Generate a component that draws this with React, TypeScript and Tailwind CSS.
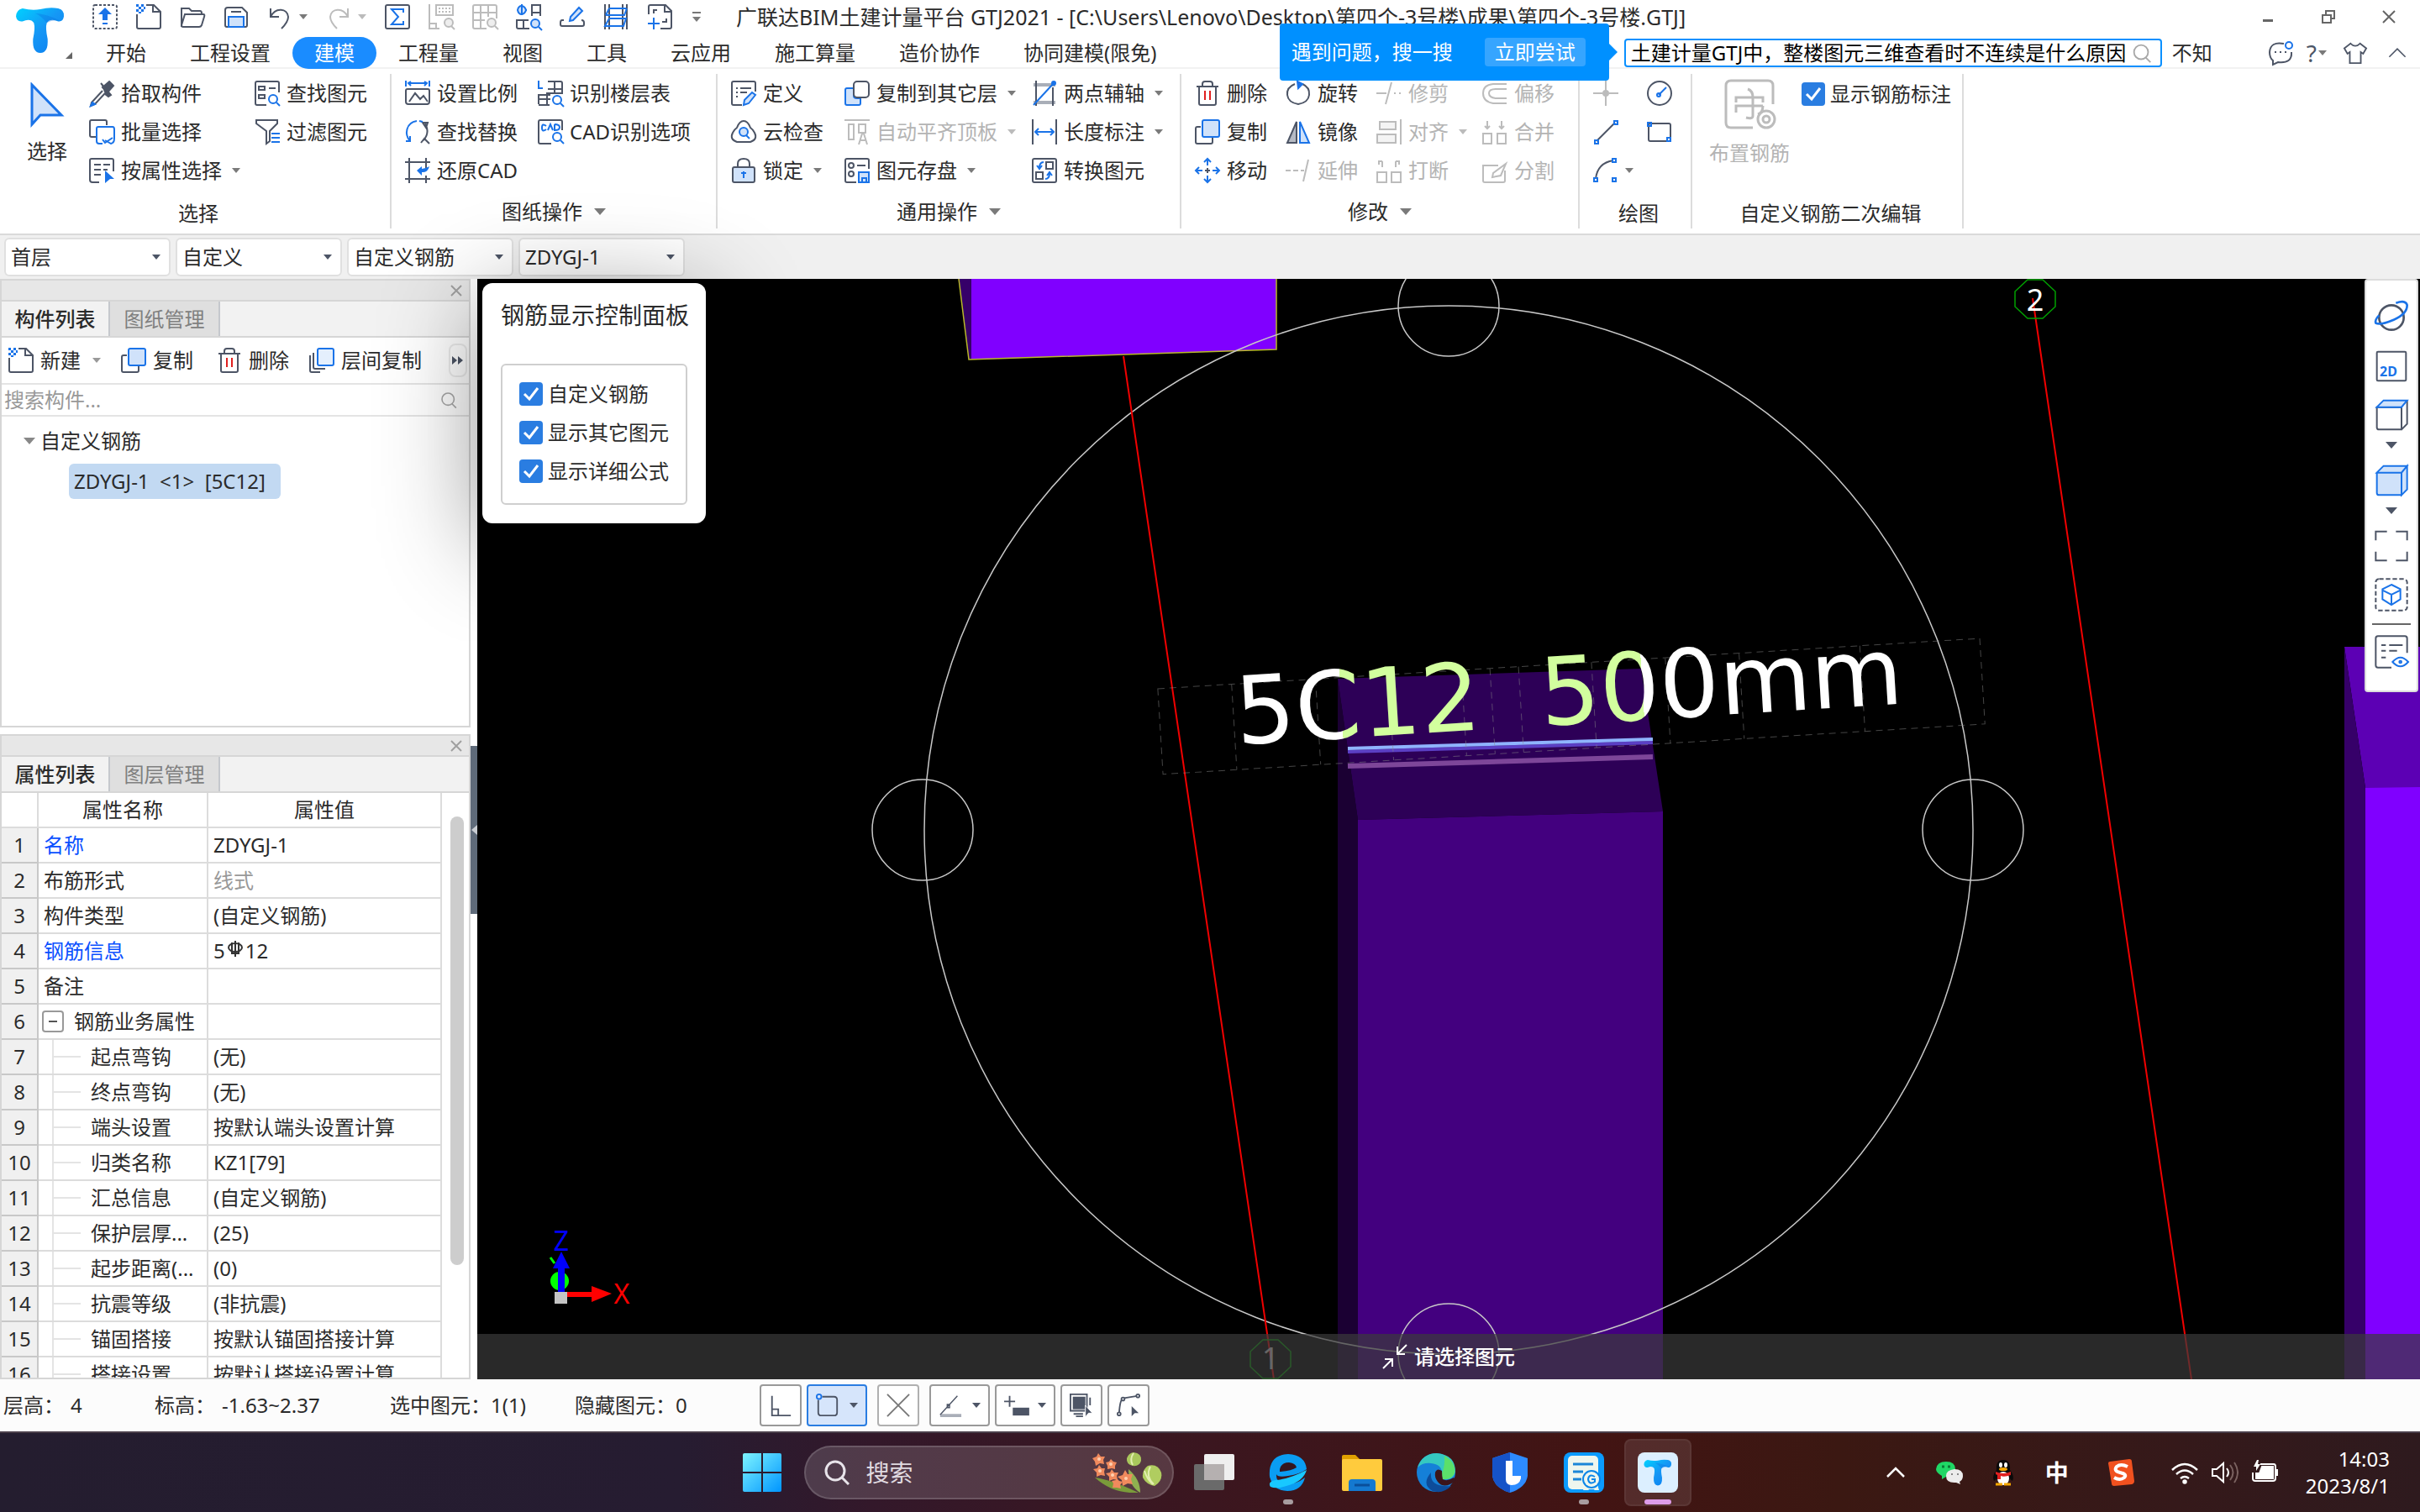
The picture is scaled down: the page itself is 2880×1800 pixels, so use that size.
import React from "react";

const D = "#4d5566";
const B = "#1a73e8";
const F = "#d0e2fa";
const G = "#bcbcbc";

// every glyph is drawn on a 30x30 grid
const icons: Record<string, React.ReactNode> = {
  upload: (
    <>
      <rect x="1" y="1" width="28" height="28" rx="2" strokeDasharray="3 2" />
      <path d="M15 4l8 8h-5v7h-6v-7H7z" fill={B} stroke="none" />
      <path d="M12 23h6" stroke={B} />
    </>
  ),
  newFile: (
    <>
      <path d="M1 12v15q0 2 2 2h24q2 0 2-2V9l-8-8h-9M20 1v8h9" />
      <path d="M0 0h3v3H0zM6 0h3v3H6zM3 3h3v3H3zM0 6h3v3H0zM6 6h3v3H6zM9 3h2v3H9zM3 9h3v2H3z" fill={B} stroke="none" />
    </>
  ),
  open: (
    <>
      <path d="M2 27V5h9l3 3h10q2 0 2 3v1" />
      <path d="M6 12h22q2 0 1 3l-3 10q-1 2-3 2H4q-2 0-2-2z" />
    </>
  ),
  save: (
    <>
      <path d="M2 7q0-3 3-3h17l6 6v15q0 2-2 2H4q-2 0-2-2z" />
      <path d="M9 9h12" />
      <path d="M6 27V15h18v12z" fill={F} stroke={B} />
    </>
  ),
  undo: <path d="M4 5v10h10M4 15C10 3 24 5 25 15q0 6-8 14" />,
  redo: <path d="M26 5v10H16M26 15C20 3 6 5 5 15q0 6 8 14" stroke={G} />,
  sum: (
    <>
      <rect x="1" y="1" width="28" height="28" rx="2" />
      <path d="M22 10V6H8l8 9-8 9h14v-4" stroke={B} />
    </>
  ),
  calcFind: (
    <g stroke={G}>
      <path d="M1 0v29h12M1 23h8v6" />
      <rect x="9" y="1" width="20" height="12" />
      <path d="M12 5h15M12 9h15" strokeDasharray="2 2" />
      <circle cx="24" cy="22" r="5" fill="#eee" />
      <path d="M27 26l4 4" />
    </g>
  ),
  gridFind: (
    <g stroke={G}>
      <path d="M17 29H3q-2 0-2-2V3q0-2 2-2h24q2 0 2 2v14M1 10h28M1 19h14M10 1v28M19 1v14" />
      <circle cx="23" cy="22" r="5" fill="#eee" />
      <path d="M27 26l4 4" />
    </g>
  ),
  schema: (
    <>
      <path d="M7 0v13M2 7h11" stroke={B} />
      <path d="M7 2q-4 0-5 5 1 5 5 5M7 2q4 1 5 5-1 4-5 5" stroke={B} fill={F} />
      <path d="M7 1v12" stroke={B} />
      <path d="M19 14V1h10v13M19 10h10M1 18v9q0 2 2 2h13M1 19h14M9 19v10" />
      <circle cx="23" cy="23" r="5" fill={F} stroke={B} />
      <path d="M27 27l4 4" stroke={B} />
    </>
  ),
  pen: (
    <>
      <path d="M5 19H3q-2 0-2 3v2q0 2 2 2h24q2 0 2-2v-2q0-3-3-3" />
      <path d="M12 20l1-5L23 4l4 4-11 11z" fill={F} stroke={B} />
    </>
  ),
  ladder: (
    <>
      <path d="M2 0v30M7 0v30M23 0v30M28 0v30" />
      <path d="M7 5h20M3 13h22l3-8M3 13L7 5M7 17h20l-3 9H2l5-9" stroke={B} />
    </>
  ),
  addPage: (
    <>
      <path d="M2 12V3q0-2 2-2h18l7 7v19q0 2-2 2H16M21 1v8h8M8 11V7h4M23 17v4h-5" />
      <path d="M8 16v14M1 23h14" stroke={B} />
    </>
  ),
  dropper: (
    <>
      <path d="M14 3l12 14-3 2-4-3M24 1l5 5-7 8-6-6z" fill={D} />
      <path d="M16 12L3 26l-1 4 5-2 12-13" />
      <path d="M4 26l-2 4 5-2z" fill={B} stroke={B} />
    </>
  ),
  batch: (
    <>
      <path d="M8 21H3q-2 0-2-2V3q0-2 2-2h16q2 0 2 2v4" />
      <path d="M9 11q0-2 2-2h17q2 0 2 3v11q0 5-4 6l-7-4M16 29h-4q-3 0-3-3V11M16 24l3 4 9-6" stroke={B} />
    </>
  ),
  byProp: (
    <>
      <path d="M12 29H4q-3 0-3-3V3q0-2 2-2h24q2 0 2 2v13M6 8h8M17 8h8M6 14h8M17 14h5M6 20h8" />
      <path d="M19 15l11 10h-5l-6 5z" fill={B} stroke="none" />
    </>
  ),
  findEl: (
    <>
      <path d="M14 29H3q-2 0-2-2V3q0-2 2-2h24q2 0 2 2v11M17 9h8" />
      <rect x="5" y="7" width="7" height="4" />
      <rect x="5" y="17" width="7" height="4" />
      <circle cx="22" cy="22" r="5" stroke={B} />
      <path d="M26 26l4 4" stroke={B} />
    </>
  ),
  filter: (
    <>
      <path d="M2 1h25v4l-9 9v12l-4 3V14L2 5z" />
      <path d="M20 17h10M20 22h10M20 27h10" stroke={B} />
    </>
  ),
  scale: (
    <>
      <path d="M1 0v7M29 0v7M4 3h22M7 1L4 3l3 3M23 1l3 2-3 3" stroke={B} />
      <path d="M3 10h24q2 0 2 2v13q0 3-3 3H4q-3 0-3-3V12q0-2 2-2zM5 25l7-10 6 7 4-4 5 7" />
    </>
  ),
  replace: (
    <>
      <path d="M14 2C1 4-1 18 6 26M6 20v6H1" stroke={B} />
      <path d="M24 5q6 11-2 20M29 29l-6-6-4 5M21 4l6 0-2 6z" />
      <path d="M17 2l4 1" stroke={B} />
    </>
  ),
  restore: (
    <>
      <path d="M0 5h30M0 25h30M5 0v30M25 0v12M25 21v9" />
      <path d="M14 15l6-5v3q6-1 9-3-2 8-9 7v4z" fill={B} stroke="none" />
    </>
  ),
  floors: (
    <>
      <path d="M1 0v9h5" stroke={B} />
      <path d="M12 1h15q2 0 2 2v12H11v14M12 10h17M20 1v14M1 28V17h14M1 22h14M1 29h13" />
      <circle cx="23" cy="23" r="5" stroke={B} />
      <path d="M27 27l4 4" stroke={B} />
    </>
  ),
  cadOpt: (
    <>
      <path d="M16 29H3q-2 0-2-2V3q0-2 2-2h24q2 0 2 2v10" />
      <path d="M10 8Q5 4 5 10t5 2M12 13l3-7 3 7M20 6v7q6 0 6-3.500T20 6" stroke={B} />
      <circle cx="23" cy="21" r="5" stroke={B} />
      <path d="M27 25l4 4" stroke={B} />
    </>
  ),
  define: (
    <>
      <path d="M13 29H3q-2 0-2-2V3q0-2 2-2h24q2 0 2 2v10M6 9h2M11 9h13M6 14h2M11 14h8M6 19h2" />
      <path d="M15 29l1-6 9-9 4 3-8 10z" fill={F} stroke={B} />
    </>
  ),
  cloudCheck: (
    <>
      <path d="M7 27Q-2 24 2 16q2-4 5-6Q10 2 15 2t8 8q3 2 5 6 4 8-5 11z" />
      <circle cx="15" cy="15" r="5" fill={F} stroke={B} />
      <path d="M18 19l4 4" stroke={B} />
    </>
  ),
  lock: (
    <>
      <path d="M8 11V7q0-6 7-6t7 6v4" />
      <rect x="2" y="11" width="26" height="18" rx="2" fill={F} />
      <path d="M15 16v8M12 18h6" stroke={B} />
    </>
  ),
  copyFloor: (
    <>
      <path d="M11 9H3q-2 0-2 2v16q0 2 2 2h14q2 0 2-2v-6h-4q-4 0-4-3z" fill={F} stroke={B} />
      <rect x="11" y="1" width="18" height="19" rx="4" />
    </>
  ),
  alignTop: (
    <g stroke={G}>
      <path d="M0 1h30M5 6h6v18H5zM17 6h8v10h-8zM17 30l4-13h2l4 13M19 25h7" />
    </g>
  ),
  store: (
    <>
      <path d="M14 29H3q-2 0-2-2V3q0-2 2-2h24q2 0 2 2v10M15 9h10" />
      <circle cx="8" cy="9" r="3" />
      <circle cx="8" cy="19" r="3" />
      <path d="M17 17h12v12H17z" fill={F} stroke={B} />
      <path d="M21 29v-5h5v5" stroke={B} />
    </>
  ),
  twoPoint: (
    <>
      <path d="M2 5h26M2 26h26" stroke="#a9aeb8" strokeWidth="4" />
      <path d="M5 0v30M25 8v22" />
      <path d="M2 29L26 3" stroke={B} />
      <circle cx="26" cy="3" r="2" fill={B} stroke={B} />
    </>
  ),
  length: (
    <>
      <path d="M1 0v30M29 0v30" />
      <path d="M4 15h22M8 11l-4 4 4 4M22 11l4 4-4 4" stroke={B} />
    </>
  ),
  convert: (
    <>
      <rect x="1" y="1" width="28" height="28" rx="2" />
      <path d="M17 5h8v8h-8zM5 17h8v8H5z" />
      <path d="M14 5q-5 0-5 7M6 9l3 4 3-4M16 25q5 0 5-7M18 21l3-4 3 4" stroke={B} />
    </>
  ),
  trash: (
    <>
      <path d="M2 7h26M5 7v20q0 2 2 2h16q2 0 2-2V7M9 7V4q0-3 3-3h6q3 0 3 3v3" />
      <path d="M12 12v11M18 12v11" stroke="#e02020" />
    </>
  ),
  copy: (
    <>
      <path d="M7 9H3q-2 0-2 2v16q0 2 2 2h16q2 0 2-2v-5" />
      <rect x="9" y="1" width="20" height="20" rx="2" fill={F} stroke={B} />
    </>
  ),
  copyLayer: (
    <>
      <path d="M1 9v18q0 2 2 2h10M5 6v17q0 2 2 2h12" />
      <rect x="10" y="1" width="19" height="20" rx="2" fill="#e4effd" stroke={B} />
    </>
  ),
  move: (
    <>
      <path d="M15 1v8M15 21v8M1 15h8M21 15h8M11 5l4-4 4 4M11 25l4 4 4-4M5 11l-4 4 4 4M25 11l4 4-4 4" stroke={B} />
      <path d="M12 15h6M15 12v6" />
    </>
  ),
  rotate: (
    <>
      <path d="M11 4Q1 8 2 17t13 11q12-2 13-11T20 4" />
      <path d="M14 1l6 3-5 5z" fill={B} stroke={B} />
    </>
  ),
  mirror: (
    <>
      <path d="M13 3v25H2z" fill="#b5bac4" />
      <path d="M17 3v25h11z" fill={F} stroke={B} />
    </>
  ),
  extend: <path d="M0 15h6M9 15h6M18 15h4M21 28l6-26" stroke={G} />,
  trim: <path d="M0 15h12M21 15h2M27 15h2M11 28l7-26" stroke={G} />,
  align: (
    <g stroke={G} fill="#f4f4f4">
      <path d="M4 3h19v9H4zM1 18h22v10H1zM29 0v30" />
    </g>
  ),
  breakIcon: (
    <g stroke={G}>
      <path d="M1 17h11v12H1zM18 17h11v12H18zM7 11V4M3 8V4h4M23 11V4M27 8V4h-4" />
    </g>
  ),
  offset: <path d="M29 4H13Q1 5 1 15t12 12h16M29 10H16q-8 0-8 5t8 6h13" stroke={G} />,
  split: <path d="M19 9H1v18q0 2 2 2h22q2 0 2-2V15M12 23l1-5L28 7l-6 14z" stroke={G} />,
  merge: (
    <g stroke={G}>
      <path d="M1 17h10v12H1zM18 17h10v12H18zM6 2v9M3 8l3 3 3-3M23 2v9M20 8l3 3 3-3" />
    </g>
  ),
  point: (
    <g stroke={G}>
      <path d="M15 0v30M0 15h11M19 15h11" />
      <circle cx="15" cy="15" r="3" fill={G} />
    </g>
  ),
  circle: (
    <>
      <circle cx="15" cy="15" r="14" />
      <path d="M14 17l9-9" stroke={B} />
      <circle cx="14" cy="17" r="2" stroke={B} />
    </>
  ),
  line: (
    <>
      <path d="M4 26L26 4" />
      <path d="M2 25h4v4H2zM25 2h4v4h-4z" stroke={B} />
    </>
  ),
  rect: (
    <>
      <rect x="2" y="5" width="26" height="21" rx="2" />
      <path d="M1 4h4v4H1zM24 22h4v4h-4z" stroke={B} />
    </>
  ),
  arc: (
    <>
      <path d="M3 25Q5 6 24 3" />
      <path d="M1 24h4v4H1zM23 1h4v4h-4zM23 24h4v4h-4z" stroke={B} />
    </>
  ),
  rebar: (
    <g stroke={G} strokeWidth="1.500">
      <path d="M17 29H4q-3 0-3-3V4q0-3 3-3h22q3 0 3 3v11" />
      <path d="M14 6q3 1 3 5M7 14v-3h16v3M17 11v11q0 2-4 1M7 20v-4h16M23 16q0 4-3 5" />
      <circle cx="25" cy="24" r="5" />
      <circle cx="25" cy="24" r="2" />
    </g>
  ),
  zoom: (
    <g stroke="#a8a8a8">
      <circle cx="14" cy="14" r="9" />
      <path d="M20 21l6 6" />
    </g>
  ),
  chat: (
    <>
      <path d="M19 4Q3 1 2 14q0 7 4 10v5l6-3q17 2 16-12" />
      <path d="M8 14h2M14 14h2M20 14h2" />
      <circle cx="25" cy="6" r="4" stroke={B} />
    </>
  ),
  shirt: <path d="M9 3q6 6 12 0l8 6-4 7-3-2v14H8V14l-3 2-4-7z" />,
  chevronUp: <path d="M3 21L15 9l12 12" />,
  orbit: (
    <>
      <circle cx="15" cy="15" r="11" />
      <path d="M19 2q9-3 10 2 0 8-12 13T1 20q-1-3 3-7" stroke={B} />
    </>
  ),
  twoD: <rect x="2" y="2" width="26" height="26" rx="1" strokeWidth="1.500" />,
  cube: (
    <g strokeWidth="1.500">
      <path d="M2 8v18q0 2 2 2h20V8zM24 28l5-5V2" />
      <path d="M2 8l6-6h21l-5 6z" fill={F} stroke={B} />
    </g>
  ),
  cubeSolid: (
    <g stroke={B} fill={F} strokeWidth="1.500">
      <path d="M2 8h22v20H4q-2 0-2-2zM24 28l5-5V2l-5 6zM2 8l6-6h21l-5 6z" />
    </g>
  ),
  corners: <path d="M1 10V2h10M19 2h10v8M1 20v8h10M19 28h10v-8" strokeWidth="1.500" />,
  dashedCube: (
    <g strokeWidth="1.500">
      <rect x="1" y="1" width="28" height="28" rx="3" strokeDasharray="4 2" />
      <path d="M15 6l8 4v9l-8 5-8-5v-9zM7 11l8 4 8-4M15 15v8" stroke={B} />
    </g>
  ),
  listEye: (
    <g strokeWidth="1.500">
      <path d="M15 29H3q-2 0-2-2V3q0-2 2-2h24q2 0 2 2v13M6 9h4M13 9h12M6 14h4M13 14h7M6 20h4" />
      <path d="M16 24q7-8 14 0-7 8-14 0z" stroke={B} />
      <circle cx="23" cy="24" r="1" stroke={B} />
    </g>
  ),
  ortho: <path d="M4 3v25h24M4 20h8v8" />,
  corner: (
    <>
      <path d="M8 4h15q4 0 4 4v16q0 4-4 4H7q-4 0-4-4V8" />
      <circle cx="4" cy="4" r="3" stroke={B} />
    </>
  ),
  cross: <path d="M1 1l28 28M29 1L1 29" stroke="#777" />,
  angle: (
    <>
      <path d="M2 28h27" stroke="#a9aeb8" strokeWidth="4" />
      <path d="M2 27L24 3M11 14h3v4h-3z" strokeWidth="1.500" />
    </>
  ),
  plusBox: (
    <>
      <path d="M7 3v14M0 10h14" />
      <rect x="12" y="19" width="19" height="8" fill={D} />
    </>
  ),
  layerPick: (
    <>
      <rect x="5" y="5" width="14" height="14" fill={D} />
      <path d="M1 22V1h21v21zM5 26h12M8 29h9M26 5v10" />
      <path d="M20 15l9 10h-5l-4 5z" fill={D} stroke="#fff" strokeWidth="1" />
    </>
  ),
  nodePick: (
    <>
      <path d="M3 26Q4 8 8 6l18-3" />
      <circle cx="3" cy="26" r="2" fill="#fff" />
      <circle cx="8" cy="7" r="2" fill="#fff" />
      <circle cx="27" cy="3" r="2" fill="#fff" />
      <path d="M19 16l9 9h-5l-4 4z" fill={D} stroke="none" />
    </>
  ),
};

const Icon = ({ name, className = "size-[30px]" }: { name: string; className?: string }) => (
  <svg viewBox="0 0 30 30" className={`${className} shrink-0 overflow-visible`} fill="none" stroke={D} strokeWidth="2" aria-hidden="true">
    {icons[name]}
  </svg>
);

const Arrow = ({ color = "text-[#7a7a7a]", size = "h-1.5 w-2.5" }: { color?: string; size?: string }) => (
  <svg viewBox="0 0 10 6" preserveAspectRatio="none" className={`${color} ${size} shrink-0`} fill="currentColor" aria-hidden="true">
    <path d="M0 0h10L5 6z" />
  </svg>
);

const TLogo = ({ className }: { className: string }) => (
  <svg viewBox="0 0 60 58" className={className} aria-hidden="true">
    <defs>
      <linearGradient id="tl" x1="0" y1="0" x2="1" y2="1">
        <stop offset="0" stopColor="#00d2ff" />
        <stop offset="0.500" stopColor="#1597f5" />
        <stop offset="1" stopColor="#0a7cf0" />
      </linearGradient>
    </defs>
    <path d="M8 2q12 3 22 1Q42 0 52 2q8 2 7 10-1 7-7 6-10-4-14 2-2 6 1 20 1 17-9 17t-9-17q3-14 1-20-4-6-14-2-7 1-8-6Q0 4 8 2z" fill="url(#tl)" />
    <path d="M24 8q14 1 30 9-10-1-16 3-6-8-14-12z" fill="#0a6fe0" opacity="0.350" />
  </svg>
);

const quickRight = ["sum", "calcFind", "gridFind", "schema", "pen", "ladder", "addPage"];

const tabs = ["开始", "工程设置", "建模", "工程量", "视图", "工具", "云应用", "施工算量", "造价协作", "协同建模(限免)"];

const IconButton = ({ name, label }: { name: string; label: string }) => (
  <button aria-label={label}>
    <Icon name={name} />
  </button>
);

const TitleBar = () => (
  <header className="flex h-[82px] shadow-[inset_0_-2px_0_#f2f2f2]">
    <div className="flex w-[100px] shrink-0 items-start pt-2 pl-[18px]">
      <TLogo className="h-14 w-[60px]" />
      <svg viewBox="0 0 8 8" className="mt-[54px] size-2" fill="#666" aria-hidden="true">
        <path d="M8 0v8H0z" />
      </svg>
    </div>
    <div className="min-w-0 flex-1">
      <div className="flex h-10 items-center gap-[22px] pr-[22px] pl-2.5">
        <IconButton name="upload" label="上传" />
        <IconButton name="newFile" label="新建" />
        <IconButton name="open" label="打开" />
        <IconButton name="save" label="保存" />
        <button className="flex items-center gap-2" aria-label="撤销">
          <Icon name="undo" />
          <Arrow />
        </button>
        <button className="flex items-center gap-2" aria-label="恢复">
          <Icon name="redo" />
          <Arrow color="text-[#bbb]" />
        </button>
        {quickRight.map((q) => (
          <IconButton key={q} name={q} label={q} />
        ))}
        <button className="flex w-3.5 flex-col items-center gap-1" aria-label="更多">
          <span className="h-0.5 w-2.5 bg-[#777]" />
          <Arrow />
        </button>
        <h1 className="ml-[18px] text-[25px] whitespace-nowrap">广联达BIM土建计量平台 GTJ2021 - [C:\Users\Lenovo\Desktop\第四个-3号楼\成果\第四个-3号楼.GTJ]</h1>
        <div className="ml-auto flex items-center gap-[42px] text-[#555]">
          <button className="flex h-[30px] w-[30px] items-center justify-center" aria-label="最小化">
            <span className="mt-2 h-[3px] w-3 bg-[#666]" />
          </button>
          <button className="flex w-[30px] justify-center" aria-label="还原">
            <svg viewBox="0 0 16 16" className="size-4" fill="none" stroke="#666" strokeWidth="2">
              <path d="M1 6h10v9H1zM5 6V1h10v9h-4" />
            </svg>
          </button>
          <button className="flex w-[30px] justify-center" aria-label="关闭">
            <svg viewBox="0 0 16 16" className="size-4" stroke="#666" strokeWidth="2">
              <path d="M1 1l14 14M15 1L1 15" />
            </svg>
          </button>
        </div>
      </div>
      <div className="flex h-[42px] items-end">
        <nav className="flex shrink-0">
          {tabs.map((t) => (
            <button key={t} className={`h-[38px] rounded-full px-[26px] whitespace-nowrap ${t === "建模" ? "bg-[#1a8cff] text-white" : ""}`}>
              {t}
            </button>
          ))}
        </nav>
        <div className="ml-auto flex h-[38px] items-center pr-[15px]">
          <div className="relative mr-3 flex h-[34px] w-[640px] items-center rounded-sm border-2 border-[#0a90ff] bg-white pr-2 pl-1.5">
            <input className="min-w-0 flex-1 text-black outline-none" aria-label="搜索帮助" defaultValue="土建计量GTJ中，整楼图元三维查看时不连续是什么原因" />
            <Icon name="zoom" className="size-7" />
            <div className="absolute right-full -top-5 z-20 mr-5 flex h-[68px] w-[392px] items-center justify-between rounded bg-[#0090ff] pr-7 pl-3.5 whitespace-nowrap text-white">
              <span>遇到问题，搜一搜</span>
              <button className="h-[34px] rounded-sm bg-[#36a5ff] px-3">立即尝试</button>
              <svg viewBox="0 0 10 20" className="absolute top-6 left-full h-5 w-2.5" fill="#0090ff">
                <path d="M0 0l10 10L0 20z" />
              </svg>
            </div>
          </div>
          <span className="w-[114px]">不知</span>
          <button aria-label="消息">
            <Icon name="chat" />
          </button>
          <button className="ml-4 flex items-center gap-0.5 text-[28px] leading-7 text-[#4d5566]" aria-label="帮助">
            ?<Arrow />
          </button>
          <button className="ml-5" aria-label="皮肤">
            <Icon name="shirt" className="size-7" />
          </button>
          <button className="ml-6" aria-label="收起">
            <Icon name="chevronUp" className="size-6" />
          </button>
        </div>
      </div>
    </div>
  </header>
);

type Tool = { icon: string; text?: string; arrow?: boolean; off?: boolean };

const ToolButton = ({ icon, text, arrow, off }: Tool) => (
  <button disabled={off} aria-label={text ?? icon} className={`flex h-[46px] items-center gap-2 whitespace-nowrap ${off ? "text-[#b4b4b4]" : ""}`}>
    <Icon name={icon} />
    {text}
    {arrow && (
      <span className={text ? "ml-1" : ""}>
        <Arrow color={off ? "text-[#bbb]" : "text-[#7a7a7a]"} />
      </span>
    )}
  </button>
);

const Col = ({ w, tools }: { w: string; tools: Tool[] }) => (
  <div className={`${w} shrink-0`}>
    {tools.map((t) => (
      <ToolButton key={t.icon} {...t} />
    ))}
  </div>
);

const Group = ({ label, arrow, pad = "pl-4", children }: { label: string; arrow?: boolean; pad?: string; children: React.ReactNode }) => (
  <section className="flex h-[184px] shrink-0 flex-col border-r-2 border-[#dcdcdc]">
    <div className={`flex h-[138px] ${pad}`}>{children}</div>
    <div className={`flex h-11 items-center justify-center gap-3.5 ${arrow ? "pt-2" : "pt-3 pl-2"}`}>
      {label}
      {arrow && <Arrow size="h-2 w-3.5" />}
    </div>
  </section>
);

const Check = ({ label, gap }: { label: string; gap: string }) => (
  <label className={`flex items-center ${gap}`}>
    <span className="relative flex size-7 shrink-0">
      <input type="checkbox" defaultChecked className="size-7 appearance-none rounded-sm bg-[#2a7de1]" />
      <svg viewBox="0 0 28 28" className="pointer-events-none absolute inset-0 size-7" fill="none" stroke="#fff" strokeWidth="3">
        <path d="M6 14l6 6L22 7" />
      </svg>
    </span>
    {label}
  </label>
);

const Ribbon = () => (
  <div className="flex h-[198px] border-b-2 border-[#dadada] pt-1.5">
    <Group label="选择" pad="pl-1.5">
      <button className="flex w-[100px] flex-col items-center gap-3 pt-2.5">
        <svg viewBox="0 0 42 54" className="h-[54px] w-[42px]" fill={F} stroke={B} strokeWidth="3">
          <path d="M3 3v47l10-11h25z" />
        </svg>
        选择
      </button>
      <Col
        w="w-[197px]"
        tools={[
          { icon: "dropper", text: "拾取构件" },
          { icon: "batch", text: "批量选择" },
          { icon: "byProp", text: "按属性选择", arrow: true },
        ]}
      />
      <Col w="w-[161px]" tools={[{ icon: "findEl", text: "查找图元" }, { icon: "filter", text: "过滤图元" }]} />
    </Group>
    <Group label="图纸操作" arrow>
      <Col
        w="w-[158px]"
        tools={[
          { icon: "scale", text: "设置比例" },
          { icon: "replace", text: "查找替换" },
          { icon: "restore", text: "还原CAD" },
        ]}
      />
      <Col w="w-[212px]" tools={[{ icon: "floors", text: "识别楼层表" }, { icon: "cadOpt", text: "CAD识别选项" }]} />
    </Group>
    <Group label="通用操作" arrow>
      <Col
        w="w-[135px]"
        tools={[
          { icon: "define", text: "定义" },
          { icon: "cloudCheck", text: "云检查" },
          { icon: "lock", text: "锁定", arrow: true },
        ]}
      />
      <Col
        w="w-[223px]"
        tools={[
          { icon: "copyFloor", text: "复制到其它层", arrow: true },
          { icon: "alignTop", text: "自动平齐顶板", arrow: true, off: true },
          { icon: "store", text: "图元存盘", arrow: true },
        ]}
      />
      <Col
        w="w-[176px]"
        tools={[
          { icon: "twoPoint", text: "两点辅轴", arrow: true },
          { icon: "length", text: "长度标注", arrow: true },
          { icon: "convert", text: "转换图元" },
        ]}
      />
    </Group>
    <Group label="修改" arrow>
      <Col
        w="w-[108px]"
        tools={[
          { icon: "trash", text: "删除" },
          { icon: "copy", text: "复制" },
          { icon: "move", text: "移动" },
        ]}
      />
      <Col
        w="w-[108px]"
        tools={[
          { icon: "rotate", text: "旋转" },
          { icon: "mirror", text: "镜像" },
          { icon: "extend", text: "延伸", off: true },
        ]}
      />
      <Col
        w="w-[126px]"
        tools={[
          { icon: "trim", text: "修剪", off: true },
          { icon: "align", text: "对齐", arrow: true, off: true },
          { icon: "breakIcon", text: "打断", off: true },
        ]}
      />
      <Col
        w="w-[114px]"
        tools={[
          { icon: "offset", text: "偏移", off: true },
          { icon: "merge", text: "合并", off: true },
          { icon: "split", text: "分割", off: true },
        ]}
      />
    </Group>
    <Group label="绘图">
      <Col w="w-16" tools={[{ icon: "point", off: true }, { icon: "line" }, { icon: "arc", arrow: true }]} />
      <Col w="w-[52px]" tools={[{ icon: "circle" }, { icon: "rect" }]} />
    </Group>
    <Group label="自定义钢筋二次编辑" pad="pl-5">
      <button disabled className="flex w-24 flex-col items-center gap-3 pt-1.5 text-[#b4b4b4]">
        <Icon name="rebar" className="size-[60px]" />
        布置钢筋
      </button>
      <div className="w-[205px] pt-2 pl-3.5">
        <Check label="显示钢筋标注" gap="gap-1.5" />
      </div>
    </Group>
  </div>
);

const selectors = [
  { label: "楼层", value: "首层" },
  { label: "构件分类", value: "自定义" },
  { label: "构件类型", value: "自定义钢筋" },
  { label: "构件", value: "ZDYGJ-1" },
];

const SelectorBar = () => (
  <div className="flex h-[52px] items-center gap-1.5 bg-[#f0f0f0] pl-[5px]">
    {selectors.map((s) => (
      <div key={s.label} className="relative flex items-center">
        <select aria-label={s.label} className="h-[46px] w-[198px] appearance-none rounded-md border-2 border-[#e0e0e0] bg-white px-1.5">
          <option>{s.value}</option>
        </select>
        <span className="pointer-events-none absolute right-3">
          <Arrow color="text-[#4d5566]" />
        </span>
      </div>
    ))}
  </div>
);

const DockHead = ({ active, other }: { active: string; other: string }) => (
  <>
    <div className="flex h-[23px] shrink-0 items-center justify-end bg-[#e7e7e7] pr-2">
      <button aria-label="关闭面板">
        <svg viewBox="0 0 14 14" className="size-3.5" stroke="#a0a0a0" strokeWidth="2">
          <path d="M1 1l12 12M13 1L1 13" />
        </svg>
      </button>
    </div>
    <div className="flex h-[45px] shrink-0 border-y-2 border-[#d6d6d6] bg-[#f2f2f2]">
      <button className="w-[129px] border-r-2 border-[#c5c8cd] bg-[#f2f2f2] font-medium">{active}</button>
      <button className="w-[131px] border-r-2 border-[#c5c8cd] bg-[#dfdfdf] text-[#808080]">{other}</button>
    </div>
  </>
);

const ComponentPanel = () => (
  <section className="flex h-[534px] flex-col border-2 border-[#d6d6d6] bg-white">
    <DockHead active="构件列表" other="图纸管理" />
    <div className="flex h-14 shrink-0 items-center border-b-2 border-[#e4e4e4] pl-2">
      <button className="flex w-[134px] items-center gap-2">
        <Icon name="newFile" />
        新建
        <span className="ml-1.5">
          <Arrow color="text-[#999]" />
        </span>
      </button>
      <button className="flex w-[114px] items-center gap-2">
        <Icon name="copy" />
        复制
      </button>
      <button className="flex w-[110px] items-center gap-2">
        <Icon name="trash" />
        删除
      </button>
      <button className="flex w-[166px] items-center gap-2">
        <Icon name="copyLayer" />
        层间复制
      </button>
      <button className="flex h-10 w-[22px] items-center justify-center rounded-lg border-2 border-[#ececec]" aria-label="更多">
        <svg viewBox="0 0 14 10" className="h-2.5 w-3.5 shrink-0" fill={D}>
          <path d="M0 0l6 5-6 5zM7 0l6 5-6 5z" />
        </svg>
      </button>
    </div>
    <div className="flex h-[38px] shrink-0 items-center border-b-2 border-[#e4e4e4] pr-3 pl-[3px]">
      <input className="min-w-0 flex-1 outline-none placeholder:text-[#999]" aria-label="搜索构件" placeholder="搜索构件..." />
      <Icon name="zoom" className="size-6" />
    </div>
    <ul className="pt-1.5">
      <li>
        <div className="flex h-[46px] items-center gap-1.5 pl-[26px]">
          <Arrow color="text-[#888]" size="h-2 w-3.5" />
          自定义钢筋
        </div>
        <ul className="mt-1 pl-20">
          <li className="flex h-[42px] w-[252px] items-center rounded-md bg-[#c2d9f2] pl-1.5 whitespace-pre">{"ZDYGJ-1  <1>  [5C12]"}</li>
        </ul>
      </li>
    </ul>
  </section>
);

const RebarMark = () => (
  <svg viewBox="0 0 20 20" className="mx-0.5 mb-2 inline size-5" fill="none" stroke="#333" strokeWidth="2" aria-label="C">
    <ellipse cx="10" cy="8" rx="8" ry="5" />
    <path d="M10 0v19M6 2v12M14 2v12M5 15h10" />
  </svg>
);

type Prop = { name: string; value: React.ReactNode; blue?: boolean; dim?: boolean; kind?: "parent" | "child" };

const props: Prop[] = [
  { name: "名称", value: "ZDYGJ-1", blue: true },
  { name: "布筋形式", value: "线式", dim: true },
  { name: "构件类型", value: "(自定义钢筋)" },
  { name: "钢筋信息", value: <>5<RebarMark />12</>, blue: true },
  { name: "备注", value: "" },
  { name: "钢筋业务属性", value: "", kind: "parent" },
  { name: "起点弯钩", value: "(无)", kind: "child" },
  { name: "终点弯钩", value: "(无)", kind: "child" },
  { name: "端头设置", value: "按默认端头设置计算", kind: "child" },
  { name: "归类名称", value: "KZ1[79]", kind: "child" },
  { name: "汇总信息", value: "(自定义钢筋)", kind: "child" },
  { name: "保护层厚...", value: "(25)", kind: "child" },
  { name: "起步距离(...", value: "(0)", kind: "child" },
  { name: "抗震等级", value: "(非抗震)", kind: "child" },
  { name: "锚固搭接", value: "按默认锚固搭接计算", kind: "child" },
  { name: "搭接设置", value: "按默认搭接设置计算", kind: "child" },
];

const PropName = ({ p }: { p: Prop }) => {
  if (p.kind === "parent") {
    return (
      <div className="flex items-center gap-3 pl-1">
        <button className="flex size-[26px] items-center justify-center rounded-sm border-2 border-[#999]" aria-label="折叠">
          <span className="h-0.5 w-2.5 bg-[#555]" />
        </button>
        {p.name}
      </div>
    );
  }
  if (p.kind === "child") {
    return (
      <div className="flex h-10 items-center">
        <span className="h-10 w-[18px] border-r-2 border-[#e4e4e4]" />
        <span className="mr-3 h-0.5 w-8 bg-[#e4e4e4]" />
        {p.name}
      </div>
    );
  }
  return <div className={`pl-1.5 ${p.blue ? "text-[#0a50ff]" : ""}`}>{p.name}</div>;
};

const PropertyPanel = () => (
  <section className="flex min-h-0 flex-1 flex-col border-2 border-[#d6d6d6] bg-white">
    <DockHead active="属性列表" other="图层管理" />
    <div className="flex min-h-0 flex-1 overflow-hidden">
      <div className="min-w-0 flex-1">
        <table className="w-full table-fixed border-separate border-spacing-0 whitespace-nowrap">
          <colgroup>
            <col className="w-11" />
            <col className="w-[202px]" />
            <col />
          </colgroup>
          <thead>
            <tr>
              <th className="h-[42px] border-r-2 border-b-2 border-[#dcdcdc] p-0" aria-label="序号"></th>
              <th className="h-[42px] border-r-2 border-b-2 border-[#dcdcdc] p-0 font-normal">属性名称</th>
              <th className="h-[42px] border-r-2 border-b-2 border-[#dcdcdc] p-0 font-normal">属性值</th>
            </tr>
          </thead>
          <tbody>
            {props.map((p, i) => (
              <tr key={p.name}>
                <td className="h-[42px] border-r-2 border-b-2 border-[#c8c8c8] bg-[#f0f0f0] p-0 text-center">{i + 1}</td>
                <td className="h-[42px] border-r-2 border-b-2 border-[#dcdcdc] p-0">
                  <PropName p={p} />
                </td>
                <td className={`h-[42px] border-r-2 border-b-2 border-[#dcdcdc] p-0 pl-1.5 ${p.dim ? "text-[#999]" : ""}`}>{p.value}</td>
              </tr>
            ))}
          </tbody>
        </table>
      </div>
      <div className="w-8 shrink-0 pt-7 pl-2.5">
        <div className="h-[534px] w-4 rounded-full bg-[#cdcdcd]" />
      </div>
    </div>
  </section>
);

const viewTools = [
  { icon: "orbit", arrow: false },
  { icon: "twoD", arrow: false },
  { icon: "cube", arrow: true },
  { icon: "cubeSolid", arrow: true },
  { icon: "corners", arrow: false },
  { icon: "dashedCube", arrow: false },
];

const Scene = () => (
  <svg viewBox="568 332 2312 1310" preserveAspectRatio="xMidYMid slice" className="block size-full bg-black" fill="none">
    <defs>
      <linearGradient id="label" gradientUnits="userSpaceOnUse" x1="1380" y1="0" x2="2356" y2="0">
        <stop offset="0.222" stopColor="#fff" />
        <stop offset="0.222" stopColor="#d2ff9e" />
        <stop offset="0.590" stopColor="#d2ff9e" />
        <stop offset="0.590" stopColor="#fff" />
      </linearGradient>
    </defs>
    <path d="M1141 332h15v96l-3 0z" fill="#360069" />
    <path d="M1156 332h363v84l-363 12z" fill="#8000ff" />
    <path d="M1141 332l12 96 366-12v-84" stroke="#b9b92a" strokeWidth="1.500" />
    <path d="M1592 808l24 168v666h-24z" fill="#1b0033" />
    <path d="M1592 808l361-12 26 170-363 10z" fill="#2d0057" />
    <path d="M1616 976l363-10v676h-363z" fill="#43007f" />
    <path d="M1604 895l363-11" stroke="#5b3fc4" strokeWidth="4" />
    <path d="M1604 891l363-11" stroke="#8fb4ff" strokeWidth="4" />
    <path d="M1604 912l363-11" stroke="#7d4699" strokeWidth="6" />
    <path d="M2790 770h90v168h-65z" fill="#5c00b4" />
    <path d="M2790 770l25 168v704h-25z" fill="#360069" />
    <path d="M2815 938l65-1v705h-65z" fill="#8000ff" />
    <g stroke="#c8c8c8" strokeWidth="1.500">
      <circle cx="1724" cy="988" r="624" />
      <circle cx="1724" cy="364" r="60" />
      <circle cx="1098" cy="988" r="60" />
      <circle cx="2348" cy="988" r="60" />
      <circle cx="1724" cy="1612" r="60" />
    </g>
    <g stroke="#f00000" strokeWidth="2">
      <path d="M1337 424l179 1218M2419 355l189 1287" />
    </g>
    <g stroke="#00a000" strokeWidth="1.500">
      <path d="M2413 333h18l15 14v18l-15 14h-18l-15-14v-18z" />
      <path d="M1503 1595h18l15 14v18l-15 14h-18l-15-14v-18z" />
    </g>
    <text x="2422" y="370" textAnchor="middle" fontSize="36" fill="#fff">2</text>
    <text x="1512" y="1630" textAnchor="middle" fontSize="36" fill="#ccc">1</text>
    <g transform="rotate(-3.500 1868 840)">
      <path
        d="M1380 790H2360V892H1380zM1468 790v102M1568 790v102M1655 790v102M1742 790v102M1776 790v102M1810 790v102M1897 790v102M1985 790v102M2073 790v102M2217 790v102"
        stroke="#8a8a8a"
        strokeOpacity="0.500"
        strokeDasharray="8 6"
      />
      <text x="1868" y="862" textAnchor="middle" fontSize="112" xmlSpace="preserve" fill="url(#label)" className="font-['DejaVu_Sans',sans-serif] whitespace-pre">
        {"5C12  500mm"}
      </text>
    </g>
    <text x="668" y="1489" textAnchor="middle" fontSize="32" fill="#0000ff">Z</text>
    <text x="740" y="1552" textAnchor="middle" fontSize="32" fill="#ff0000">X</text>
    <circle cx="666" cy="1525" r="11" fill="#00ff00" />
    <path d="M655 1497l5 7" stroke="#00ff00" strokeWidth="3" />
    <path d="M664 1548v-38h-6l10-20 10 20h-6v38z" fill="#0000ff" />
    <path d="M674 1538h30v-7l24 9-24 10v-6h-30z" fill="#ff0000" />
    <path d="M660 1538h15v14h-15z" fill="#c4c4c4" />
  </svg>
);

const Viewport = () => (
  <div className="relative z-10 min-w-0 flex-1">
    {/* shadow of the floating panel, spills over the docks only */}
    <div className="absolute top-[5px] left-1.5 h-[286px] w-[266px] rounded-xl shadow-[0_24px_120px_rgba(0,0,0,0.45)]" />
    <div className="absolute inset-0 overflow-hidden">
      <Scene />
    </div>
    <div className="absolute top-[5px] left-1.5 h-[286px] w-[266px] rounded-xl bg-white px-[22px] pt-[18px]">
      <h2 className="text-[28px] leading-10 whitespace-nowrap">钢筋显示控制面板</h2>
      <div className="mt-[38px] flex h-[168px] flex-col gap-3.5 rounded-md border-2 border-[#cfcfcf] pt-[18px] pl-5">
        <Check label="自定义钢筋" gap="gap-1.5" />
        <Check label="显示其它图元" gap="gap-1.5" />
        <Check label="显示详细公式" gap="gap-1.5" />
      </div>
    </div>
    <div className="absolute top-0 right-0.5 flex h-[492px] w-16 flex-col items-center rounded border-2 border-[#dcdcdc] bg-white pt-6">
      {viewTools.map((v) => (
        <div key={v.icon} className="mb-[18px] flex flex-col items-center gap-3">
          <button className="relative" aria-label={v.icon}>
            <Icon name={v.icon} className="size-10" />
            {v.icon === "twoD" && <span className="absolute bottom-1.5 left-1.5 text-base leading-4 font-bold text-[#1a73e8]">2D</span>}
          </button>
          {v.arrow && <Arrow color="text-[#4d5566]" size="h-2 w-3.5" />}
        </div>
      ))}
      <span className="-mt-1 mb-3 h-0.5 w-[46px] shrink-0 bg-[#666]" />
      <button aria-label="显示设置">
        <Icon name="listEye" className="size-10" />
      </button>
    </div>
    <div className="absolute inset-x-0 bottom-0 flex h-[54px] items-center justify-center gap-2 bg-[#3b3b3b]/70 font-medium text-white">
      <svg viewBox="0 0 30 30" className="size-[30px]" fill="none" stroke="#fff" strokeWidth="2">
        <path d="M29 1L18 12M18 3v9h9M1 29l11-11M3 18h9v9" />
      </svg>
      请选择图元
    </div>
  </div>
);

const status = [
  { label: "层高：", value: "4", w: "w-[180px] gap-2" },
  { label: "标高：", value: "-1.63~2.37", w: "w-[280px] gap-2" },
  { label: "选中图元：", value: "1(1)", w: "w-[220px]" },
  { label: "隐藏图元：", value: "0", w: "w-[220px]" },
];

const snapTools = [
  { icon: "ortho", cls: "w-[50px] border-[#999] bg-white" },
  { icon: "corner", arrow: true, cls: "w-[72px] border-[#2a7de1] bg-[#d6e5fb]" },
  { icon: "cross", cls: "mx-1.5 w-[50px] border-[#b0b0b0] bg-white" },
  { icon: "angle", arrow: true, cls: "w-[72px] border-[#999] bg-white" },
  { icon: "plusBox", arrow: true, cls: "w-[72px] border-[#999] bg-white" },
  { icon: "layerPick", cls: "w-[50px] border-[#999] bg-white" },
  { icon: "nodePick", cls: "w-[50px] border-[#999] bg-white" },
];

const StatusBar = () => (
  <footer className="flex h-[62px] shrink-0 items-center bg-[#fcfcfc] pl-1">
    {status.map((s) => (
      <div key={s.label} className={`flex whitespace-nowrap ${s.w}`}>
        <span>{s.label}</span>
        <span>{s.value}</span>
      </div>
    ))}
    <div className="flex gap-1.5">
      {snapTools.map((s) => (
        <button key={s.icon} aria-label={s.icon} className={`flex h-[50px] items-center justify-center gap-3 rounded border-2 ${s.cls}`}>
          <Icon name={s.icon} className="size-7" />
          {s.arrow && <Arrow color="text-[#4d5566]" />}
        </button>
      ))}
    </div>
  </footer>
);

const Blossom = () => (
  <svg viewBox="0 0 84 48" className="h-12 w-[84px]" aria-hidden="true">
    <path d="M4 30q18 2 52 18-30 2-52-18z" fill="#7a9b3a" />
    <path d="M44 20q14 12 14 28-14-8-14-28z" fill="#8fb050" />
    <g fill="#f08a5d">
      <path d="M8 1l3 4 5 0-2 4 1 5-5-1-5 3-1-5-3-4 5-2z" />
      <path d="M23 8l3 3 4 1-2 4 0 4-4-1-5 1 0-4-2-4 4-1z" />
      <path d="M9 15l3 4 4 0-1 4 1 5-5-1-5 2 0-5-4-4 5-1z" />
      <path d="M24 20l3 4 5 0-2 4 1 5-5-1-5 2 0-5-4-4 5-1z" />
      <path d="M40 21l3 5 6 0-2 6 2 6-6-1-6 3-1-7-5-4 6-2z" />
      <path d="M30 31l3 3 4 1-3 4 1 4-5-1-5 0 1-5-2-3 5-1z" />
    </g>
    <g fill="#ffd0b0">
      <circle cx="9" cy="8" r="2" />
      <circle cx="23" cy="14" r="2" />
      <circle cx="10" cy="22" r="2" />
      <circle cx="25" cy="27" r="2" />
      <circle cx="41" cy="31" r="2" />
    </g>
    <path d="M50 0q10 1 9 10-2 7-10 6-8-2-7-9 2-6 8-7z" fill="#a9c75c" />
    <path d="M67 16q12-3 16 8 2 10-8 16-10-2-14-10-1-9 6-14z" fill="#b0cd60" />
    <path d="M50 1q-5 7-1 14M70 17q-6 11 4 21M63 22q3 10 10 16" stroke="#e2eeb0" strokeWidth="2" fill="none" />
  </svg>
);

const apps = [
  {
    name: "任务视图",
    mark: "",
    art: (
      <>
        <rect x="0" y="14" width="36" height="31" rx="2" fill="#6a6a6a" />
        <rect x="12" y="2" width="36" height="31" rx="2" fill="#efefef" />
        <path d="M12 14h24v19H12z" fill="#b5b0b0" />
      </>
    ),
  },
  {
    name: "浏览器",
    mark: "h-1.5 w-3 bg-[#a89da0]",
    art: (
      <>
        <path d="M2 29Q0 3 24 2q20 1 22 18-8 6-22 8-13 2-14-2-1 10 12 12 12 0 22-8-4 16-21 16Q6 46 2 29z" fill="#0a9df2" />
        <path d="M14 20q2-8 11-8 8 1 9 6-6 4-20 5z" fill="#35161f" />
        <path d="M3 41q-4-6 6-8 16-1 37-12-4 14-24 19-12 4-19 1z" fill="#18c8ff" />
      </>
    ),
  },
  {
    name: "文件资源管理器",
    mark: "",
    art: (
      <>
        <path d="M0 5q0-2 2-2h14l5 5v8H0z" fill="#e0a000" />
        <rect x="0" y="8" width="48" height="38" rx="2" fill="#ffcb3d" />
        <path d="M8 46V36q0-4 4-4h24q4 0 4 4v10z" fill="#1479d0" />
        <path d="M15 39h18" stroke="#0a4f9a" strokeWidth="3" />
      </>
    ),
  },
  {
    name: "Edge",
    mark: "",
    art: (
      <>
        <circle cx="24" cy="24" r="23" fill="#1580d8" />
        <path d="M2 18Q8 1 25 1q22 2 22 22-2 11-15 9-5-2-1-7 0-11-13-12Q8 12 2 18z" fill="#35c8c0" />
        <path d="M34 4q14 8 12 21-4 8-14 7-5-2-1-7 4-10 3-21z" fill="#5be06a" />
        <path d="M18 24q-2 18 24 16-10 10-22 6-14-8-2-22z" fill="#0d4c9a" />
        <path d="M23 24q2-6 8-2 0 6 1 10 5 3 13-2l3 3q-14 12-22 2-4-5-3-11z" fill="#3b151b" />
      </>
    ),
  },
  {
    name: "电脑管家",
    mark: "",
    art: (
      <>
        <path d="M24 0l21 7v21q-2 14-21 20Q5 42 3 28V7z" fill="#2d8bff" />
        <path d="M24 0v48Q5 42 3 28V7z" fill="#1553c8" />
        <path d="M19 10h8v18h10v3q-2 8-11 8-7 0-7-7z" fill="#fff" />
      </>
    ),
  },
  {
    name: "广联达G+",
    mark: "h-1.5 w-3 bg-[#a89da0]",
    art: (
      <>
        <rect width="48" height="48" rx="8" fill="#0b9bff" />
        <rect x="5" y="4" width="36" height="40" rx="5" fill="#eef6ee" />
        <path d="M11 14h24M11 23h12M11 32h10" stroke="#1a86d8" strokeWidth="3" />
        <path d="M26 38l-3 7h6l4-3 4 3h5l-2-7z" fill="#eef6ee" />
        <circle cx="33" cy="32" r="11" fill="#0b86e8" />
        <circle cx="33" cy="32" r="9" fill="#eef6ee" />
        <path d="M37 29q-7-4-8 3 1 7 8 3v-3h-4" stroke="#0b86e8" strokeWidth="2" fill="none" />
      </>
    ),
  },
];

const Taskbar = () => (
  <div className="grid h-24 shrink-0 grid-cols-[1fr_auto_1fr] items-center border-t-2 border-[#4a3f4a] bg-[linear-gradient(90deg,#241d2f_0%,#261c31_28%,#33182a_36%,#3b161f_50%,#421413_66%,#3b1812_76%,#35191a_90%,#2e1a1e_100%)] text-white">
    <div />
    <div className="flex items-center pl-4">
      <button aria-label="开始菜单">
        <svg viewBox="0 0 46 46" className="size-[46px]">
          <defs>
            <linearGradient id="win" gradientUnits="userSpaceOnUse" x1="0" y1="0" x2="46" y2="46">
              <stop offset="0" stopColor="#7df4ff" />
              <stop offset="1" stopColor="#0095ff" />
            </linearGradient>
          </defs>
          <path d="M0 2q0-2 2-2h20v22H0zM24 0h20q2 0 2 2v20H24zM0 24h22v22H2q-2 0-2-2zM24 24h22v20q0 2-2 2H24z" fill="url(#win)" />
        </svg>
      </button>
      <label className="mr-2 ml-[27px] flex h-16 w-[440px] items-center rounded-full border-2 border-white/15 bg-white/15 pr-3 pl-[22px]">
        <svg viewBox="0 0 30 30" className="size-[30px] shrink-0" fill="none" stroke="#e8e4ea" strokeWidth="3">
          <circle cx="13" cy="13" r="11" />
          <path d="M21 21l8 8" />
        </svg>
        <input className="ml-5 min-w-0 flex-1 text-[28px] leading-9 outline-none placeholder:text-[#e0dae0]" placeholder="搜索" aria-label="搜索" />
        <Blossom />
      </label>
      <div className="flex gap-2">
        {apps.map((a) => (
          <button key={a.name} aria-label={a.name} className="relative flex size-20 items-center justify-center">
            <svg viewBox="0 0 48 48" className="size-12">
              {a.art}
            </svg>
            {a.mark && <span className={`absolute bottom-0.5 rounded-full ${a.mark}`} />}
          </button>
        ))}
        <button aria-label="GTJ2021" className="relative flex size-20 items-center justify-center rounded-lg border-2 border-white/5 bg-white/10">
          <span className="flex size-12 items-center justify-center rounded-lg bg-[#dcefff]">
            <TLogo className="h-8 w-[34px]" />
          </span>
          <span className="absolute bottom-0 h-1.5 w-8 rounded-full bg-[#dd9be8]" />
        </button>
      </div>
    </div>
    <div className="flex items-center justify-end pr-9">
      <svg viewBox="0 0 32 32" className="mr-8 size-8" fill="none" stroke="#fff" strokeWidth="2.500">
        <path d="M6 21l10-10 10 10" />
      </svg>
      <svg viewBox="0 0 32 32" className="mr-8 size-8">
        <path d="M12 3q11 0 11 9t-11 9l-5 3v-4q-7-4-7-8 1-9 12-9z" fill="#1fd765" />
        <path d="M22 12q10 0 10 8 0 5-4 7l1 3-5-2q-12 1-12-8 0-7 10-8z" fill="#ececec" />
        <path d="M7 9h3M14 9h3" stroke="#0a7a35" strokeWidth="3" />
        <path d="M18 18h2M25 18h2" stroke="#888" strokeWidth="2" />
      </svg>
      <svg viewBox="0 0 32 32" className="mr-8 size-8">
        <path d="M16 1q9 0 8 12 6 8 3 13-1 0-3-3-2 7-8 7t-8-7q-2 3-3 3-3-5 3-13Q7 1 16 1z" fill="#0a0a0a" />
        <ellipse cx="16" cy="23" rx="7" ry="8" fill="#fff" />
        <ellipse cx="13" cy="7" rx="2" ry="3" fill="#fff" />
        <ellipse cx="19" cy="7" rx="2" ry="3" fill="#fff" />
        <ellipse cx="16" cy="12" rx="5" ry="2" fill="#f5a800" />
        <path d="M7 15q9 4 18 0v4q-8 3-12 1v4h-4v-5l-2-1z" fill="#e02020" />
        <path d="M7 30h8M17 30h8" stroke="#f5a800" strokeWidth="3" />
      </svg>
      <span className="mr-11 w-8 text-center text-[28px] leading-9 font-bold">中</span>
      <svg viewBox="0 0 32 32" className="mr-11 size-8">
        <path d="M1 5q0-2 2-2L26 0q3 0 3 3l3 23q0 3-3 4L8 32q-3 0-3-3z" fill="#f1511f" />
        <path d="M24 9q-8-4-13 0-4 5 4 7 9 2 5 6-5 4-12 0" fill="none" stroke="#fff" strokeWidth="4" />
      </svg>
      <svg viewBox="0 0 32 32" className="mr-4 size-8" fill="none" stroke="#fff" strokeWidth="2.500">
        <path d="M1 13q15-14 30 0M6 18q10-9 20 0M11 23q5-4 10 0" />
        <circle cx="16" cy="27" r="1.500" fill="#fff" />
      </svg>
      <svg viewBox="0 0 32 32" className="mr-4 size-8" fill="none" stroke="#fff" strokeWidth="2">
        <path d="M1 12h5l8-7v22l-8-7H1zM18 11q4 5 0 10" />
        <path d="M22 7q7 9 0 18M27 4q8 12 0 24" stroke="#7a6260" />
      </svg>
      <svg viewBox="0 0 32 32" className="mr-8 size-8" fill="none" stroke="#fff" strokeWidth="2">
        <path d="M10 6h16q2 0 2 3v14q0 3-3 3H4q-3 0-3-3v-7M30 12v8" />
        <path d="M12 9h13v14H5v-6h4z" fill="#fff" />
        <path d="M6 1L2 9h3v5l5-8H7l1-5z" fill="#fff" stroke="none" />
      </svg>
      <div className="text-right leading-8">
        <div>14:03</div>
        <div>2023/8/1</div>
      </div>
    </div>
  </div>
);

export default function App() {
  return (
    <div className="flex h-screen flex-col overflow-hidden bg-white font-['Noto_Sans','Noto_Sans_CJK_SC',sans-serif] text-2xl leading-8 text-[#2b2b2b]">
      <TitleBar />
      <Ribbon />
      <SelectorBar />
      <main className="flex min-h-0 flex-1">
        <aside className="flex w-[560px] shrink-0 flex-col gap-2">
          <ComponentPanel />
          <PropertyPanel />
        </aside>
        <div className="w-2 shrink-0 pt-[556px]">
          <button className="flex h-[200px] w-2 items-center bg-[#5f6b7a]" aria-label="收起面板">
            <svg viewBox="0 0 8 12" className="h-3 w-2" fill="#c8ccd2">
              <path d="M8 0v12L1 6z" />
            </svg>
          </button>
        </div>
        <Viewport />
      </main>
      <StatusBar />
      <Taskbar />
    </div>
  );
}
